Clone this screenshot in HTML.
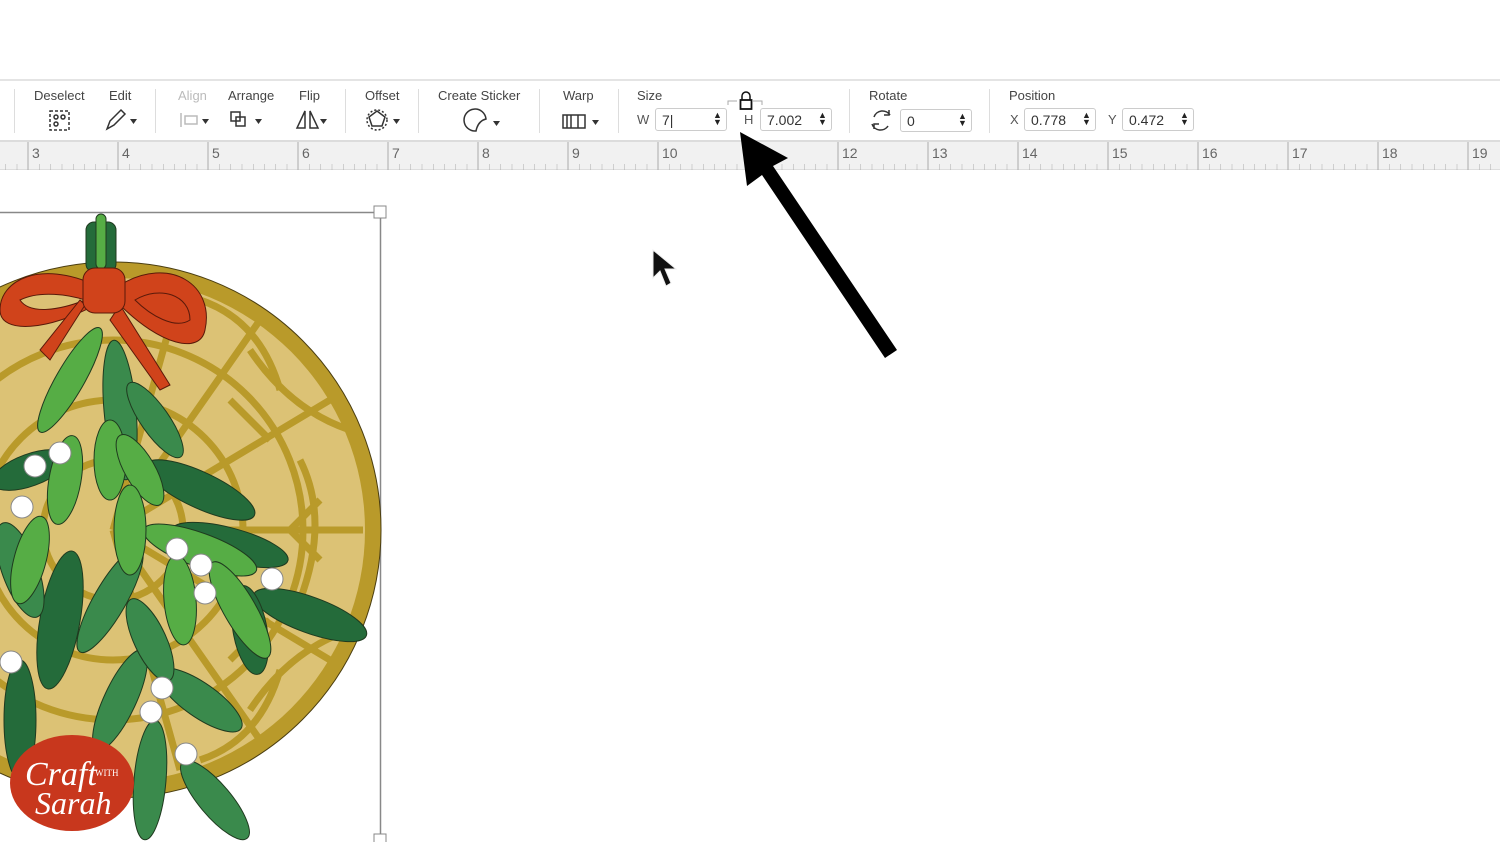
<!DOCTYPE html>
<html><head><meta charset="utf-8"><style>
*{margin:0;padding:0;box-sizing:border-box}
body{width:1500px;height:842px;overflow:hidden;background:#fff;font-family:"Liberation Sans",sans-serif;position:relative}
.tb{position:absolute;left:0;top:79px;width:1500px;height:63px;background:#fff;border-top:2px solid #e4e4e4;border-bottom:2px solid #dcdcdc}
.lbl{position:absolute;top:7px;font-size:13px;color:#444}
.sep{position:absolute;top:8px;width:1px;height:44px;background:#ddd}
.inp{position:absolute;top:27px;height:23px;border:1px solid #ccc;border-radius:3px;font-size:14px;color:#333;padding:3px 6px}
.spin{position:absolute;top:31px;font-size:9px;line-height:7px;color:#222}
.ruler{position:absolute;left:0;top:142px;width:1500px;height:28px;background:#f1f1f1;border-bottom:1px solid #ddd}
.ruler span{position:absolute;top:3px;font-size:14px;color:#666}
</style></head><body>
<div class="tb">
<div class="sep" style="left:14px"></div>
<div class="lbl" style="left:34px">Deselect</div>
<div class="lbl" style="left:109px">Edit</div>
<div class="sep" style="left:155px"></div>
<div class="lbl" style="left:178px;color:#bbb">Align</div>
<div class="lbl" style="left:228px">Arrange</div>
<div class="lbl" style="left:299px">Flip</div>
<div class="sep" style="left:345px"></div>
<div class="lbl" style="left:365px">Offset</div>
<div class="sep" style="left:418px"></div>
<div class="lbl" style="left:438px">Create Sticker</div>
<div class="sep" style="left:539px"></div>
<div class="lbl" style="left:563px">Warp</div>
<div class="sep" style="left:618px"></div>
<div class="lbl" style="left:637px">Size</div>
<div class="sep" style="left:849px"></div>
<div class="lbl" style="left:869px">Rotate</div>
<div class="sep" style="left:989px"></div>
<div class="lbl" style="left:1009px">Position</div>
<svg style="position:absolute;left:0;top:0" width="1500" height="63">
<g fill="none" stroke="#333" stroke-width="1.5">
<rect x="50" y="30" width="19" height="19" stroke-dasharray="3 2"/><circle cx="56" cy="36" r="2"/><circle cx="63" cy="36" r="2"/><circle cx="56" cy="43" r="2"/>
<path d="M107 48 l3-8 l11-11 l4 4 l-11 11z"/>
<path d="M181 32 v14 M185 35 h12 v8 h-12z" stroke="#bbb"/>
<rect x="231" y="31" width="9" height="9"/><rect x="236" y="36" width="9" height="9"/>
<path d="M305 30 l-8 17 h8z M310 30 l8 17 h-8z"/>
<path d="M377 30 l8 6 l-3 9 h-10 l-3-9z"/><circle cx="377" cy="39" r="10" stroke-dasharray="2 2"/>
<path d="M476 50 a11 11 0 1 1 10-12 q-8 2 -10 12z"/>
<path d="M563 34 h22 v13 h-22z M567 34 v13 M571 34 v13 M578 34 v13"/>
<path d="M742 19 v-4 a4 4 0 0 1 8 0 v4" stroke="#111"/><rect x="740.5" y="19" width="11" height="9" fill="none" stroke="#111" stroke-width="1.8"/>
<path d="M728 24 v-4 h9 M762 24 v-4 h-9" stroke="#aaa" stroke-width="1"/>
<path d="M890 34 a9 9 0 0 0 -16 2 M872 43 a9 9 0 0 0 16 2 M889 29 v5 h-5 M874 48 v-5 h5"/>
</g>
<g fill="#333">
<path d="M130 38 h7 l-3.5 5z M202 38 h7 l-3.5 5z" /><path d="M255 38 h7 l-3.5 5z M320 38 h7 l-3.5 5z M393 38 h7 l-3.5 5z M493 40 h7 l-3.5 5z M592 39 h7 l-3.5 5z"/>
</g>
</svg>
<div style="position:absolute;left:637px;top:31px;font-size:13px;color:#555">W</div>
<div class="inp" style="left:655px;width:72px">7|</div>
<div class="spin" style="left:713px">▲<br>▼</div>
<div style="position:absolute;left:744px;top:31px;font-size:13px;color:#555">H</div>
<div class="inp" style="left:760px;width:72px">7.002</div>
<div class="spin" style="left:818px">▲<br>▼</div>
<div class="inp" style="left:900px;width:72px;top:28px">0</div>
<div class="spin" style="left:958px;top:32px">▲<br>▼</div>
<div style="position:absolute;left:1010px;top:31px;font-size:13px;color:#555">X</div>
<div class="inp" style="left:1024px;width:72px">0.778</div>
<div class="spin" style="left:1082px">▲<br>▼</div>
<div style="position:absolute;left:1108px;top:31px;font-size:13px;color:#555">Y</div>
<div class="inp" style="left:1122px;width:72px">0.472</div>
<div class="spin" style="left:1180px">▲<br>▼</div>
</div>
<div class="ruler">
<span style="left:32px">3</span><span style="left:122px">4</span><span style="left:212px">5</span><span style="left:302px">6</span><span style="left:392px">7</span><span style="left:482px">8</span><span style="left:572px">9</span><span style="left:662px">10</span><span style="left:842px">12</span><span style="left:932px">13</span><span style="left:1022px">14</span><span style="left:1112px">15</span><span style="left:1202px">16</span><span style="left:1292px">17</span><span style="left:1382px">18</span><span style="left:1472px">19</span>
</div>
<svg style="position:absolute;left:0;top:142px" width="1500" height="28">
<g stroke="#aaa" stroke-width="1">
<path d="M28 0v28M118 0v28M208 0v28M298 0v28M388 0v28M478 0v28M568 0v28M658 0v28M748 0v28M838 0v28M928 0v28M1018 0v28M1108 0v28M1198 0v28M1288 0v28M1378 0v28M1468 0v28"/>
</g>
</svg>
<svg style="position:absolute;left:0;top:0" width="1500" height="842">
<defs><pattern id="tk" x="28" y="0" width="11.25" height="842" patternUnits="userSpaceOnUse"><path d="M0 164v6" stroke="#aaa"/></pattern></defs>
<rect x="0" y="160" width="1500" height="10" fill="url(#tk)"/>
<path d="M0 212.5H380.5V842" fill="none" stroke="#888" stroke-width="1.5"/>
<rect x="374" y="206" width="12" height="12" fill="#fff" stroke="#888"/>
<rect x="374" y="834" width="12" height="12" fill="#fff" stroke="#888"/>
<circle cx="113" cy="530" r="268" fill="#b99a2a" stroke="#4a3d10" stroke-width="1"/>
<circle cx="113" cy="530" r="252" fill="#dcc275"/>
<g fill="none" stroke="#b99a2a" stroke-width="7">
<circle cx="113" cy="530" r="70"/><circle cx="113" cy="530" r="130"/><circle cx="113" cy="530" r="190"/>
<path d="M363 530 L113 530 M330 400 L113 530 M330 660 L113 530 M260 320 L113 530 M260 740 L113 530 M180 290 L113 530 M180 770 L113 530"/>
<path d="M250 350 q40 60 100 80 M250 710 q40 -60 100 -80 M300 460 q30 60 0 140 M200 300 q60 20 80 90 M200 760 q60 -20 80 -90 M230 400 l40 40 M230 660 l40 -40 M320 500 l-30 30 l30 30"/>
</g>
<g stroke="#1f3a1f" stroke-width="1">
<g fill="#246b3a">
<rect x="86" y="222" width="30" height="50" rx="8"/>
<ellipse cx="200" cy="490" rx="60" ry="18" transform="rotate(25 200 490)"/>
<ellipse cx="310" cy="615" rx="60" ry="18" transform="rotate(20 310 615)"/>
<ellipse cx="60" cy="620" rx="20" ry="70" transform="rotate(10 60 620)"/>
<ellipse cx="20" cy="720" rx="16" ry="60"/>
<ellipse cx="250" cy="630" rx="17" ry="45" transform="rotate(-10 250 630)"/>
<ellipse cx="230" cy="545" rx="60" ry="17" transform="rotate(15 230 545)"/>
<ellipse cx="30" cy="470" rx="40" ry="16" transform="rotate(-20 30 470)"/>
</g>
<g fill="#3a8a4c">
<ellipse cx="120" cy="410" rx="16" ry="70" transform="rotate(-5 120 410)"/>
<ellipse cx="155" cy="420" rx="14" ry="45" transform="rotate(-35 155 420)"/>
<ellipse cx="110" cy="600" rx="16" ry="60" transform="rotate(30 110 600)"/>
<ellipse cx="200" cy="700" rx="50" ry="17" transform="rotate(35 200 700)"/>
<ellipse cx="150" cy="780" rx="16" ry="60" transform="rotate(5 150 780)"/>
<ellipse cx="215" cy="800" rx="16" ry="50" transform="rotate(-40 215 800)"/>
<ellipse cx="120" cy="700" rx="16" ry="55" transform="rotate(25 120 700)"/>
<ellipse cx="150" cy="640" rx="16" ry="45" transform="rotate(-25 150 640)"/>
<ellipse cx="20" cy="570" rx="18" ry="50" transform="rotate(-20 20 570)"/>
</g>
<g fill="#56ad45">
<rect x="96" y="214" width="10" height="55" rx="5"/>
<ellipse cx="70" cy="380" rx="14" ry="60" transform="rotate(30 70 380)"/>
<ellipse cx="110" cy="460" rx="16" ry="40"/>
<ellipse cx="140" cy="470" rx="15" ry="40" transform="rotate(-30 140 470)"/>
<ellipse cx="65" cy="480" rx="16" ry="45" transform="rotate(10 65 480)"/>
<ellipse cx="30" cy="560" rx="16" ry="45" transform="rotate(15 30 560)"/>
<ellipse cx="200" cy="550" rx="60" ry="17" transform="rotate(20 200 550)"/>
<ellipse cx="180" cy="600" rx="16" ry="45" transform="rotate(-5 180 600)"/>
<ellipse cx="240" cy="610" rx="16" ry="55" transform="rotate(-30 240 610)"/>
<ellipse cx="130" cy="530" rx="16" ry="45"/>
</g>
</g>
<g fill="#d0431b" stroke="#5a1a0a" stroke-width="1">
<path d="M95 285 C40 260 0 280 0 310 C0 335 50 330 95 305z M20 300 C40 290 70 295 85 300 C60 310 30 315 20 300z"/>
<path d="M120 285 C170 255 215 285 205 330 C200 355 160 345 120 305z M135 300 C160 285 190 295 190 320 C175 330 150 315 135 300z"/>
<path d="M120 305 L170 385 L160 390 L110 320z"/>
<path d="M85 305 L50 360 L40 350 L80 300z"/>
<rect x="83" y="268" width="42" height="45" rx="12"/>
</g>
<g fill="#fff" stroke="#888" stroke-width="1">
<circle cx="60" cy="453" r="11"/><circle cx="35" cy="466" r="11"/><circle cx="22" cy="507" r="11"/>
<circle cx="177" cy="549" r="11"/><circle cx="201" cy="565" r="11"/><circle cx="205" cy="593" r="11"/>
<circle cx="272" cy="579" r="11"/><circle cx="11" cy="662" r="11"/><circle cx="162" cy="688" r="11"/>
<circle cx="151" cy="712" r="11"/><circle cx="186" cy="754" r="11"/>
</g>
<ellipse cx="72" cy="783" rx="62" ry="48" fill="#c8371d"/>
<text x="25" y="785" font-family="Liberation Serif,serif" font-style="italic" font-size="34" fill="#fff">Craft</text>
<text x="95" y="776" font-family="Liberation Serif,serif" font-size="9" fill="#fff">WITH</text>
<text x="35" y="814" font-family="Liberation Serif,serif" font-style="italic" font-size="32" fill="#fff">Sarah</text>
<path d="M653 250 L653 278 L660 271 L666 286 L671 283 L665 269 L676 269 Z" fill="#111" stroke="#eee" stroke-width="1"/>
<path d="M740 132 L788 158 L773 166 L897 350 L885 358 L762 175 L747 186 Z" fill="#000"/>
</svg>
</body></html>
